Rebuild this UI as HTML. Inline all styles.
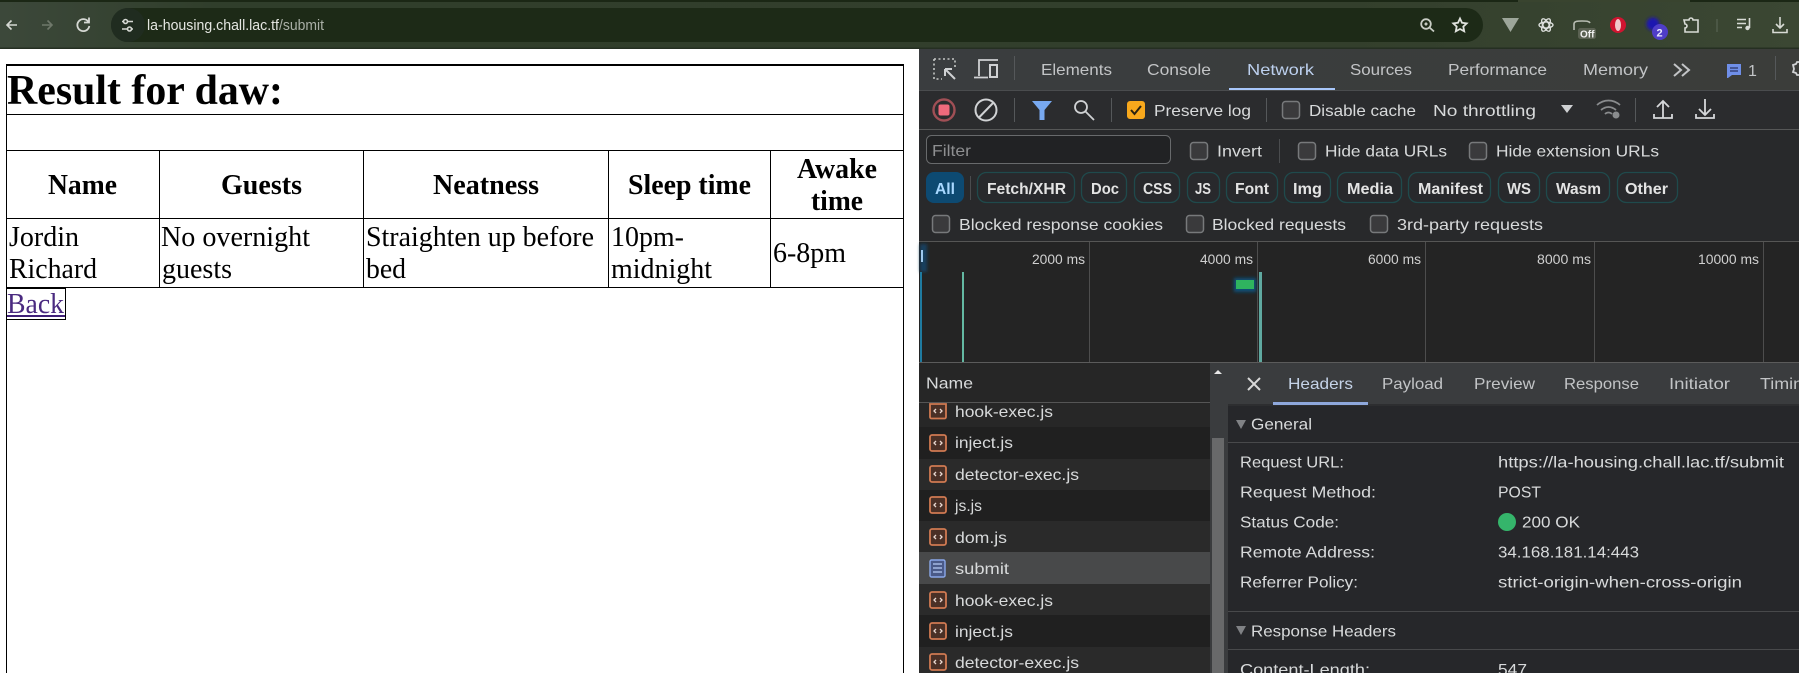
<!DOCTYPE html>
<html lang="en"><head><meta charset="utf-8"><title>la-housing</title>
<style>
html,body{margin:0;padding:0;background:#fff;width:1799px;height:673px;overflow:hidden}
svg{display:block}
text{font-family:"Liberation Sans",sans-serif;font-size:16px;fill:#d8dadb}
.s{font-family:"Liberation Serif",serif;font-size:28px;fill:#000}
.b{font-weight:700}
.t{fill:#c2c4c6}
.c{font-weight:700;font-size:15.5px;fill:#e3e3e3}
.m{font-size:13.5px;fill:#d0d0d0}
.i{fill:none;stroke:#c4c7c5;stroke-width:1.6}
.cb{fill:#3a3a3c;stroke:#77797b;stroke-width:1.5}
.ch{fill:#28292c;stroke:#1f4a4c;stroke-width:1.3}
.f{fill:#4a3026;stroke:#d07a52;stroke-width:1.8}
</style></head><body>
<svg width="1799" height="673" viewBox="0 0 1799 673" xmlns="http://www.w3.org/2000/svg">
<defs><linearGradient id="g" x1="0" x2="1" y1="0" y2="0"><stop offset="0" stop-color="#3c483a"/><stop offset=".12" stop-color="#303e2b"/><stop offset=".75" stop-color="#333f2c"/><stop offset="1" stop-color="#3b4733"/></linearGradient>
<linearGradient id="h" x1="0" x2="1" y1="0" y2="0"><stop offset="0" stop-color="#3a3d3f"/><stop offset="1" stop-color="#3b3d3a"/></linearGradient>
<filter id="bl" x="-50%" y="-50%" width="200%" height="200%"><feGaussianBlur stdDeviation="1.500"/></filter></defs>

<!-- browser chrome -->
<rect width="1799" height="49" fill="url(#g)"/>
<rect width="1799" height="2" fill="#1b2715"/>
<rect x="1518" width="172" height="2" fill="#39442f"/>
<rect y="47.500" width="1799" height="1.500" fill="#252f22"/>
<rect x="111" y="8" width="1372" height="34" rx="17" fill="#1d2a17"/>
<circle cx="128" cy="25" r="17" fill="#202c20"/>
<path class="i" style="stroke:#d5d8d3" d="M17 25H7M11.500 20.500L7 25l4.500 4.500"/>
<path class="i" style="stroke:#6f786a" d="M42 25H52M47.500 20.500L52 25l-4.500 4.500"/>
<path class="i" style="stroke:#d5d8d3;stroke-width:1.800" d="M88.500 22a6 6 0 1 0 .8 4M89 17.500v5h-5"/>
<path class="i" style="stroke:#d5d8d3" d="M122 21.500h1m5 0h5M122 29h5m5 0h1"/><circle class="i" style="stroke:#d5d8d3" cx="125.500" cy="21.500" r="2"/><circle class="i" style="stroke:#d5d8d3" cx="129.500" cy="29" r="2"/>
<text x="147" y="30" style="font-size:14.500px;fill:#e4e6e1" textLength="132" lengthAdjust="spacingAndGlyphs">la-housing.chall.lac.tf</text>
<text x="279" y="30" style="font-size:14.500px;fill:#aab0a7" textLength="45" lengthAdjust="spacingAndGlyphs">/submit</text>
<circle class="i" style="stroke:#c8ccc4;stroke-width:1.800" cx="1426" cy="24" r="4.800"/><path class="i" style="stroke:#c8ccc4;stroke-width:1.800" d="M1429.500 27.500l4.500 4M1424.500 24h3M1426 22.500v3"/>
<path class="i" style="stroke:#e0e2dd;stroke-width:1.800" d="M1460 18.500l2 4.300 4.700.6-3.400 3.200.9 4.700-4.200-2.300-4.200 2.300.9-4.700-3.400-3.200 4.700-.6z"/>
<path d="M1502 18h17l-8.500 14z" fill="#9da69a"/>
<g class="i" style="stroke:#dfe2df;stroke-width:1.300"><ellipse cx="1546" cy="25" rx="7" ry="3"/><ellipse cx="1546" cy="25" rx="7" ry="3" transform="rotate(60 1546 25)"/><ellipse cx="1546" cy="25" rx="7" ry="3" transform="rotate(120 1546 25)"/></g>
<path class="i" style="stroke:#b8bdb3" d="M1574 30v-6c0-3 4-3 8-3s7 0 8 2"/>
<rect x="1578" y="28" width="18" height="11" rx="2.500" fill="#5a6152"/><text x="1580" y="37.500" style="font-size:10.500px;font-weight:700;fill:#f0f0f0" textLength="14.500" lengthAdjust="spacingAndGlyphs">Off</text>
<circle cx="1618" cy="25" r="8" fill="#cf1430"/><ellipse cx="1618" cy="25" rx="3" ry="6" fill="#f0c8cc"/>
<circle cx="1653" cy="24" r="6.500" fill="#1f16b0" filter="url(#bl)"/><circle cx="1660" cy="32" r="8" fill="#4f3dc8"/><text x="1656.500" y="36.500" style="font-size:11px;font-weight:700;fill:#e8e8ff">2</text>
<path class="i" style="stroke:#d8dbd5" d="M1684 20h5a2 2 0 0 1 4 0h5v12h-13v-4a2 2 0 0 0 0-4z"/>
<rect x="1716.500" y="19" width="1" height="13" fill="#5d6858"/>
<path class="i" style="stroke:#d8dbd5" d="M1737 19.500h9M1737 23.500h9M1737 27.500h5M1749.500 18v10"/><circle cx="1747.500" cy="28" r="2.200" fill="#d8dbd5"/>
<path class="i" style="stroke:#d8dbd5" d="M1780 17v11M1776 24l4 4 4-4M1773 29v3.500h14V29"/>

<!-- page -->
<rect x="0" y="49" width="919" height="624" fill="#fff"/>
<g fill="#000">
<rect x="6" y="64" width="898" height="2"/><rect x="6" y="64" width="1" height="609"/><rect x="903" y="64" width="1" height="609"/>
<rect x="6" y="114" width="898" height="1"/>
<rect x="6" y="150" width="898" height="1"/><rect x="6" y="218" width="898" height="1"/><rect x="6" y="287" width="898" height="1"/>
<rect x="159" y="150" width="1" height="137"/><rect x="363" y="150" width="1" height="137"/><rect x="608" y="150" width="1" height="137"/><rect x="770" y="150" width="1" height="137"/>
</g>
<text class="s b" x="7" y="104" style="font-size:42px" textLength="276" lengthAdjust="spacingAndGlyphs">Result for daw:</text>
<text class="s b" x="48" y="194" textLength="69" lengthAdjust="spacingAndGlyphs">Name</text>
<text class="s b" x="221" y="194" textLength="81" lengthAdjust="spacingAndGlyphs">Guests</text>
<text class="s b" x="433" y="194" textLength="106" lengthAdjust="spacingAndGlyphs">Neatness</text>
<text class="s b" x="628" y="194" textLength="123" lengthAdjust="spacingAndGlyphs">Sleep time</text>
<text class="s b" x="797" y="178" textLength="80" lengthAdjust="spacingAndGlyphs">Awake</text>
<text class="s b" x="811" y="210" textLength="52" lengthAdjust="spacingAndGlyphs">time</text>
<text class="s" x="9" y="246" textLength="70" lengthAdjust="spacingAndGlyphs">Jordin</text>
<text class="s" x="9" y="278" textLength="88" lengthAdjust="spacingAndGlyphs">Richard</text>
<text class="s" x="161" y="246" textLength="149" lengthAdjust="spacingAndGlyphs">No overnight</text>
<text class="s" x="162" y="278" textLength="70" lengthAdjust="spacingAndGlyphs">guests</text>
<text class="s" x="366" y="246" textLength="228" lengthAdjust="spacingAndGlyphs">Straighten up before</text>
<text class="s" x="366" y="278" textLength="40" lengthAdjust="spacingAndGlyphs">bed</text>
<text class="s" x="611" y="246" textLength="73" lengthAdjust="spacingAndGlyphs">10pm-</text>
<text class="s" x="611" y="278" textLength="101" lengthAdjust="spacingAndGlyphs">midnight</text>
<text class="s" x="773" y="262" textLength="73" lengthAdjust="spacingAndGlyphs">6-8pm</text>
<text class="s" x="7" y="313" style="fill:#4a2a80" textLength="57" lengthAdjust="spacingAndGlyphs">Back</text>
<rect x="7" y="315" width="58" height="2" fill="#3f1f78"/>
<rect x="6.500" y="288.500" width="59" height="31" fill="none" stroke="#000"/>

<!-- devtools base -->
<rect x="919" y="49" width="880" height="624" fill="#282828"/>
<rect x="919" y="49" width="880" height="41" fill="url(#h)"/>
<rect x="919" y="90" width="880" height="1" fill="#4a4c4e"/>
<rect x="919" y="91" width="880" height="38" fill="#2b2c2e"/>
<rect x="919" y="129" width="880" height="1" fill="#565757"/>
<rect x="919" y="130" width="880" height="111" fill="#28292b"/>
<rect x="919" y="241" width="880" height="1" fill="#565655"/>
<rect x="919" y="242" width="880" height="120" fill="#242424"/>
<rect x="919" y="362" width="880" height="1" fill="#5b5b5b"/>

<!-- toolbar 1 -->
<path class="i" stroke-dasharray="2 2.500" d="M934 59h21v8M934 59v20h8"/>
<path class="i" style="stroke:#cfd1d3;stroke-width:2" d="M945 69l10 10M945 69v7M945 69h7"/>
<path class="i" style="stroke:#cfd1d3;stroke-width:1.800" d="M979 76V60h19M974 77.500h14"/><rect class="i" style="stroke:#cfd1d3;stroke-width:2" x="990" y="65" width="7" height="12"/>
<rect x="1014" y="56" width="1" height="24" fill="#55585a"/>
<text class="t" x="1041" y="75" textLength="71" lengthAdjust="spacingAndGlyphs">Elements</text>
<text class="t" x="1147" y="75" textLength="64" lengthAdjust="spacingAndGlyphs">Console</text>
<text x="1247" y="75" style="fill:#bcd0ee" textLength="67" lengthAdjust="spacingAndGlyphs">Network</text>
<rect x="1229" y="88" width="106" height="2" fill="#a8c7fa"/>
<text class="t" x="1350" y="75" textLength="62" lengthAdjust="spacingAndGlyphs">Sources</text>
<text class="t" x="1448" y="75" textLength="99" lengthAdjust="spacingAndGlyphs">Performance</text>
<text class="t" x="1583" y="75" textLength="65" lengthAdjust="spacingAndGlyphs">Memory</text>
<path class="i" style="stroke:#c2c4c6;stroke-width:2" d="M1674 64l7 6-7 6M1682 64l7 6-7 6"/>
<path d="M1727 64h14v11h-9l-4 3h-1z" fill="#6f8fe8"/><path d="M1730 68h8M1730 71h8" stroke="#2a3566" stroke-width="1.200"/>
<text x="1748" y="76" class="t" style="font-size:16px">1</text>
<rect x="1775" y="56" width="1" height="24" fill="#55585a"/>
<path class="i" style="stroke:#d0d2d4;stroke-width:1.800" d="M1799 62h-2l-1 2-3 1 1 4-1 3 3 1 1 2h2"/>

<!-- toolbar 2 -->
<circle cx="944" cy="110" r="10.500" fill="none" stroke="#a04f55" stroke-width="2.400"/><rect x="938.500" y="104.500" width="11" height="11" rx="2" fill="#ef6a7c"/>
<circle class="i" style="stroke:#d0d2d4;stroke-width:2" cx="986" cy="110" r="10.500"/><path class="i" style="stroke:#d0d2d4;stroke-width:2" d="M979 117.500l14.500-15"/>
<rect x="1014" y="98" width="1" height="24" fill="#55585a"/>
<path d="M1032 101h20l-7.500 9v10h-5v-10z" fill="#78a9f0"/>
<circle class="i" style="stroke:#d0d2d4;stroke-width:1.800" cx="1081" cy="107" r="6"/><path class="i" style="stroke:#d0d2d4;stroke-width:1.800" d="M1085.500 111.500l8.500 8.500"/>
<rect x="1111" y="98" width="1" height="24" fill="#55585a"/>
<rect x="1127" y="101" width="18" height="18" rx="3" fill="#f8a81c"/><path d="M1131 110l3.500 4 6.500-8" fill="none" stroke="#2a2210" stroke-width="2"/>
<text x="1154" y="116" textLength="97" lengthAdjust="spacingAndGlyphs">Preserve log</text>
<rect x="1266" y="98" width="1" height="24" fill="#55585a"/>
<rect class="cb" x="1282.500" y="101.500" width="17" height="17" rx="3"/>
<text x="1309" y="116" textLength="107" lengthAdjust="spacingAndGlyphs">Disable cache</text>
<text x="1433" y="116" textLength="103" lengthAdjust="spacingAndGlyphs">No throttling</text>
<path d="M1561 105h12l-6 8z" fill="#cfd1d3"/>
<path class="i" style="stroke:#8a8c8e;stroke-width:1.800" d="M1597 105c7-6 16-6 23 0M1601 110c5-4 10-4 15 0M1605 114c2-2 5-2 7 0"/><circle cx="1616" cy="115" r="3.500" fill="#8a8c8e"/>
<rect x="1635" y="98" width="1" height="24" fill="#55585a"/>
<path class="i" style="stroke:#d6d8da;stroke-width:1.800" d="M1663 118v-16M1657 107l6-6 6 6M1654 114v4h18v-4"/>
<path class="i" style="stroke:#d6d8da;stroke-width:1.800" d="M1705 99v15M1699 109l6 6 6-6M1696 114v4h18v-4"/>

<!-- filter row -->
<rect x="926.500" y="135.500" width="244" height="28" rx="5" fill="#212224" stroke="#686a6c"/>
<text x="932" y="156" style="fill:#8e8f91" textLength="39" lengthAdjust="spacingAndGlyphs">Filter</text>
<rect class="cb" x="1190.500" y="142.500" width="17" height="17" rx="3"/>
<text x="1217" y="156.500" textLength="45" lengthAdjust="spacingAndGlyphs">Invert</text>
<rect x="1279" y="139" width="1" height="24" fill="#4a4c4e"/>
<rect class="cb" x="1298.500" y="142.500" width="17" height="17" rx="3"/>
<text x="1325" y="156.500" textLength="122" lengthAdjust="spacingAndGlyphs">Hide data URLs</text>
<rect class="cb" x="1469.500" y="142.500" width="17" height="17" rx="3"/>
<text x="1496" y="156.500" textLength="163" lengthAdjust="spacingAndGlyphs">Hide extension URLs</text>

<!-- chips -->
<rect x="926" y="172" width="38" height="31" rx="8" fill="#0d4a72"/>
<text class="c" x="935" y="194" style="fill:#a8d8ff" textLength="20" lengthAdjust="spacingAndGlyphs">All</text>
<rect x="970" y="176" width="1" height="24" fill="#4a4c4e"/>
<rect class="ch" x="977.500" y="172.500" width="97" height="30" rx="9"/><text class="c" x="987" y="194" textLength="79" lengthAdjust="spacingAndGlyphs">Fetch/XHR</text>
<rect class="ch" x="1081.500" y="172.500" width="45" height="30" rx="9"/><text class="c" x="1091" y="194" textLength="28" lengthAdjust="spacingAndGlyphs">Doc</text>
<rect class="ch" x="1134.500" y="172.500" width="45" height="30" rx="9"/><text class="c" x="1143" y="194" textLength="29" lengthAdjust="spacingAndGlyphs">CSS</text>
<rect class="ch" x="1187.500" y="172.500" width="32" height="30" rx="9"/><text class="c" x="1195" y="194" textLength="16" lengthAdjust="spacingAndGlyphs">JS</text>
<rect class="ch" x="1226.500" y="172.500" width="51" height="30" rx="9"/><text class="c" x="1235" y="194" textLength="34" lengthAdjust="spacingAndGlyphs">Font</text>
<rect class="ch" x="1284.500" y="172.500" width="46" height="30" rx="9"/><text class="c" x="1293" y="194" textLength="29" lengthAdjust="spacingAndGlyphs">Img</text>
<rect class="ch" x="1337.500" y="172.500" width="64" height="30" rx="9"/><text class="c" x="1347" y="194" textLength="46" lengthAdjust="spacingAndGlyphs">Media</text>
<rect class="ch" x="1408.500" y="172.500" width="82" height="30" rx="9"/><text class="c" x="1418" y="194" textLength="65" lengthAdjust="spacingAndGlyphs">Manifest</text>
<rect class="ch" x="1498.500" y="172.500" width="41" height="30" rx="9"/><text class="c" x="1507" y="194" textLength="24" lengthAdjust="spacingAndGlyphs">WS</text>
<rect class="ch" x="1546.500" y="172.500" width="63" height="30" rx="9"/><text class="c" x="1556" y="194" textLength="45" lengthAdjust="spacingAndGlyphs">Wasm</text>
<rect class="ch" x="1617.500" y="172.500" width="60" height="30" rx="9"/><text class="c" x="1625" y="194" textLength="43" lengthAdjust="spacingAndGlyphs">Other</text>

<!-- row 5 -->
<rect class="cb" x="932.500" y="215.500" width="17" height="17" rx="3"/>
<text x="959" y="230" textLength="204" lengthAdjust="spacingAndGlyphs">Blocked response cookies</text>
<rect class="cb" x="1186.500" y="215.500" width="17" height="17" rx="3"/>
<text x="1212" y="230" textLength="134" lengthAdjust="spacingAndGlyphs">Blocked requests</text>
<rect class="cb" x="1370.500" y="215.500" width="17" height="17" rx="3"/>
<text x="1397" y="230" textLength="146" lengthAdjust="spacingAndGlyphs">3rd-party requests</text>

<!-- timeline -->
<g fill="#4d4d4d"><rect x="1089" y="242" width="1" height="120"/><rect x="1257" y="242" width="1" height="120"/><rect x="1425" y="242" width="1" height="120"/><rect x="1594" y="242" width="1" height="120"/><rect x="1763" y="242" width="1" height="120"/></g>
<text class="m" x="1032" y="264" textLength="53" lengthAdjust="spacingAndGlyphs">2000 ms</text>
<text class="m" x="1200" y="264" textLength="53" lengthAdjust="spacingAndGlyphs">4000 ms</text>
<text class="m" x="1368" y="264" textLength="53" lengthAdjust="spacingAndGlyphs">6000 ms</text>
<text class="m" x="1537" y="264" textLength="54" lengthAdjust="spacingAndGlyphs">8000 ms</text>
<text class="m" x="1698" y="264" textLength="61" lengthAdjust="spacingAndGlyphs">10000 ms</text>
<rect x="920" y="244" width="7" height="28" fill="#123f5e" filter="url(#bl)"/><rect x="921" y="250" width="2" height="12" fill="#9fc9ee"/>
<rect x="920" y="272" width="2" height="90" fill="#1f7ba0"/>
<rect x="962" y="272" width="2" height="90" fill="#63b8a2"/>
<rect x="1259" y="272" width="3" height="90" fill="#5fa9a0"/>
<rect x="1234" y="278" width="22" height="14" fill="#0d5078" filter="url(#bl)"/><rect x="1236" y="280" width="18" height="9" fill="#2fb35f" filter="url(#bl)" style="filter:none"/>

<!-- name panel -->
<rect x="919" y="363" width="291" height="310" fill="#262626"/>
<text x="926" y="388.500" textLength="47" lengthAdjust="spacingAndGlyphs">Name</text>
<rect x="919" y="402" width="291" height="1" fill="#555"/>
<g>
<rect x="919" y="403" width="291" height="24" fill="#272727"/>
<rect x="919" y="427" width="291" height="32" fill="#202020"/>
<rect x="919" y="459" width="291" height="31" fill="#2a2a2a"/>
<rect x="919" y="490" width="291" height="31" fill="#202020"/>
<rect x="919" y="521" width="291" height="31" fill="#2a2a2a"/>
<rect x="919" y="552" width="291" height="32" fill="#48494a"/>
<rect x="919" y="584" width="291" height="31" fill="#2b2b2b"/>
<rect x="919" y="615" width="291" height="32" fill="#202020"/>
<rect x="919" y="647" width="291" height="26" fill="#2a2a2a"/>
</g>
<g>
<path class="f" d="M930 404v13a1.500 1.500 0 0 0 1.500 1.500h13a1.500 1.500 0 0 0 1.500-1.500V404z"/><path d="M936 409l-2 2 2 2M940 409l2 2-2 2" fill="none" stroke="#e8d8d0" stroke-width="1.300"/>
<rect class="f" x="930" y="435" width="16" height="16" rx="2"/><path d="M936 441l-2 2 2 2M940 441l2 2-2 2" fill="none" stroke="#e8d8d0" stroke-width="1.300"/>
<rect class="f" x="930" y="466" width="16" height="16" rx="2"/><path d="M936 472l-2 2 2 2M940 472l2 2-2 2" fill="none" stroke="#e8d8d0" stroke-width="1.300"/>
<rect class="f" x="930" y="497" width="16" height="16" rx="2"/><path d="M936 503l-2 2 2 2M940 503l2 2-2 2" fill="none" stroke="#e8d8d0" stroke-width="1.300"/>
<rect class="f" x="930" y="529" width="16" height="16" rx="2"/><path d="M936 535l-2 2 2 2M940 535l2 2-2 2" fill="none" stroke="#e8d8d0" stroke-width="1.300"/>
<rect x="930" y="560" width="15" height="17" rx="1.500" fill="#4a5a88" stroke="#8aa8ea" stroke-width="1.400"/><path d="M933 564h9M933 568h9M933 572h9" stroke="#b8ccf4" stroke-width="1.300"/>
<rect class="f" x="930" y="592" width="16" height="16" rx="2"/><path d="M936 598l-2 2 2 2M940 598l2 2-2 2" fill="none" stroke="#e8d8d0" stroke-width="1.300"/>
<rect class="f" x="930" y="623" width="16" height="16" rx="2"/><path d="M936 629l-2 2 2 2M940 629l2 2-2 2" fill="none" stroke="#e8d8d0" stroke-width="1.300"/>
<rect class="f" x="930" y="654" width="16" height="16" rx="2"/><path d="M936 660l-2 2 2 2M940 660l2 2-2 2" fill="none" stroke="#e8d8d0" stroke-width="1.300"/>
</g>
<text x="955" y="417" textLength="98" lengthAdjust="spacingAndGlyphs">hook-exec.js</text>
<text x="955" y="448" textLength="58" lengthAdjust="spacingAndGlyphs">inject.js</text>
<text x="955" y="480" textLength="124" lengthAdjust="spacingAndGlyphs">detector-exec.js</text>
<text x="955" y="511" textLength="27" lengthAdjust="spacingAndGlyphs">js.js</text>
<text x="955" y="543" textLength="52" lengthAdjust="spacingAndGlyphs">dom.js</text>
<text x="955" y="574" textLength="54" lengthAdjust="spacingAndGlyphs">submit</text>
<text x="955" y="606" textLength="98" lengthAdjust="spacingAndGlyphs">hook-exec.js</text>
<text x="955" y="637" textLength="58" lengthAdjust="spacingAndGlyphs">inject.js</text>
<text x="955" y="668" textLength="124" lengthAdjust="spacingAndGlyphs">detector-exec.js</text>

<!-- scrollbar + details -->
<rect x="1210" y="363" width="589" height="310" fill="#3a3c3e"/>
<rect x="1212" y="438" width="12" height="235" fill="#68696a"/>
<path d="M1214 374l4-4 4 4z" fill="#e8e8e8"/>
<rect x="1228" y="406" width="571" height="267" fill="#26272a"/>
<rect x="1228" y="404" width="571" height="2" fill="#2d2e30"/>
<path class="i" style="stroke:#d8d8d8;stroke-width:2" d="M1248 378l12 12M1260 378l-12 12"/>
<text x="1288" y="389" style="fill:#c5d3e8" textLength="65" lengthAdjust="spacingAndGlyphs">Headers</text>
<rect x="1273" y="402" width="95" height="3" fill="#8fa8dc"/>
<text class="t" x="1382" y="389" textLength="61" lengthAdjust="spacingAndGlyphs">Payload</text>
<text class="t" x="1474" y="389" textLength="61" lengthAdjust="spacingAndGlyphs">Preview</text>
<text class="t" x="1564" y="389" textLength="75" lengthAdjust="spacingAndGlyphs">Response</text>
<text class="t" x="1669" y="389" textLength="61" lengthAdjust="spacingAndGlyphs">Initiator</text>
<text class="t" x="1760" y="389" textLength="53" lengthAdjust="spacingAndGlyphs">Timing</text>

<path d="M1236 420h10l-5 9z" fill="#808285"/>
<text x="1251" y="429.500" textLength="61" lengthAdjust="spacingAndGlyphs">General</text>
<rect x="1228" y="442" width="571" height="1" fill="#48494b"/>
<text x="1240" y="467.500" textLength="104" lengthAdjust="spacingAndGlyphs">Request URL:</text>
<text x="1240" y="497.500" textLength="136" lengthAdjust="spacingAndGlyphs">Request Method:</text>
<text x="1240" y="527.500" textLength="99" lengthAdjust="spacingAndGlyphs">Status Code:</text>
<text x="1240" y="557.500" textLength="135" lengthAdjust="spacingAndGlyphs">Remote Address:</text>
<text x="1240" y="587.500" textLength="118" lengthAdjust="spacingAndGlyphs">Referrer Policy:</text>
<text x="1498" y="467.500" textLength="286" lengthAdjust="spacingAndGlyphs">https://la-housing.chall.lac.tf/submit</text>
<text x="1498" y="497.500" textLength="43" lengthAdjust="spacingAndGlyphs">POST</text>
<circle cx="1507" cy="522" r="9" fill="#35b56b"/>
<text x="1522" y="527.500" textLength="58" lengthAdjust="spacingAndGlyphs">200 OK</text>
<text x="1498" y="557.500" textLength="141" lengthAdjust="spacingAndGlyphs">34.168.181.14:443</text>
<text x="1498" y="587.500" textLength="244" lengthAdjust="spacingAndGlyphs">strict-origin-when-cross-origin</text>
<rect x="1228" y="611" width="571" height="1" fill="#48494b"/>
<path d="M1236 626h10l-5 9z" fill="#808285"/>
<text x="1251" y="636.500" textLength="145" lengthAdjust="spacingAndGlyphs">Response Headers</text>
<rect x="1228" y="649" width="571" height="1" fill="#48494b"/>
<text x="1240" y="675" textLength="130" lengthAdjust="spacingAndGlyphs">Content-Length:</text>
<text x="1498" y="675" textLength="29" lengthAdjust="spacingAndGlyphs">547</text>
</svg>
</body></html>
